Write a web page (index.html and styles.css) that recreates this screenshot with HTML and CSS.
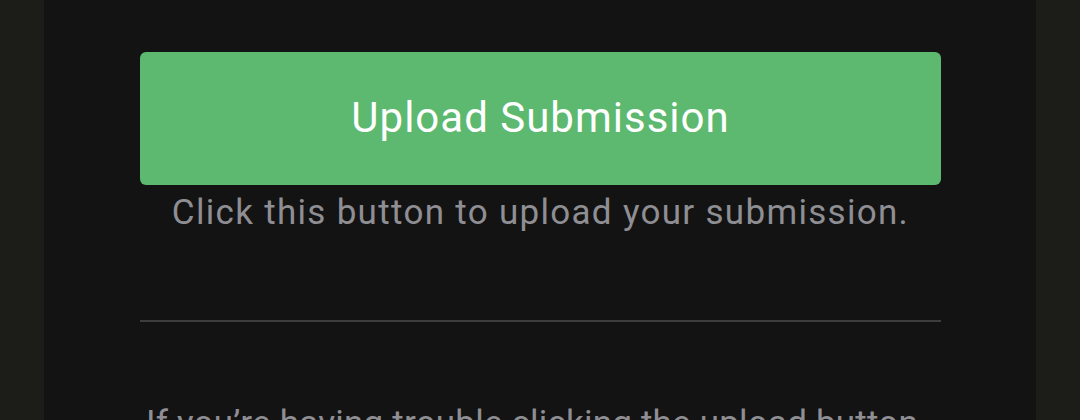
FILE: index.html
```html
<!DOCTYPE html>
<html lang="en">
<head>
    <meta charset="UTF-8">
    <meta name="viewport" content="width=device-width, initial-scale=1.0">
    <title>Upload Submission</title>
    <link rel="stylesheet" href="styles.css">
</head>
<body>
    <div class="page">
        <div class="card">
            <button class="upload">Upload Submission</button>
            <p class="hint">Click this button to upload your submission.</p>
            <hr class="divider">
            <p class="help">If you’re having trouble clicking the upload button, you can also drag and drop your file here.</p>
        </div>
    </div>
</body>
</html>
```

FILE: styles.css
```css
body{
    margin: 0;
    background: #1c1d19;
    font-family: Roboto, "Noto Sans", Arial, sans-serif;
    overflow: hidden;
}

.page{
    width: 992px;
    margin-left: 44px;
    height: 100vh;
    overflow: hidden;
    background: #131313;
}

.card{
    padding: 52px 95px 0 96px;
}

.upload{
    display: block;
    width: 100%;
    height: 133px;
    padding: 0 0 2px;
    background: #5cb96f;
    color: #fff;
    border: none;
    border-radius: 6px;
    font-family: inherit;
    font-size: 42px;
    letter-spacing: 1px;
    cursor: pointer;
}

.hint{
    margin: 7px 0 0;
    text-align: center;
    color: #8e8e93;
    font-size: 35px;
    line-height: 42px;
    letter-spacing: 1.3px;
}

.divider{
    border: none;
    height: 2px;
    background: #3d3d3d;
    margin: 86px 0 0;
}

.help{
    margin: 81px 0 0;
    padding-left: 6px;
    color: #8e8e93;
    font-size: 35px;
    line-height: 42px;
    letter-spacing: 0.2px;
}
```
